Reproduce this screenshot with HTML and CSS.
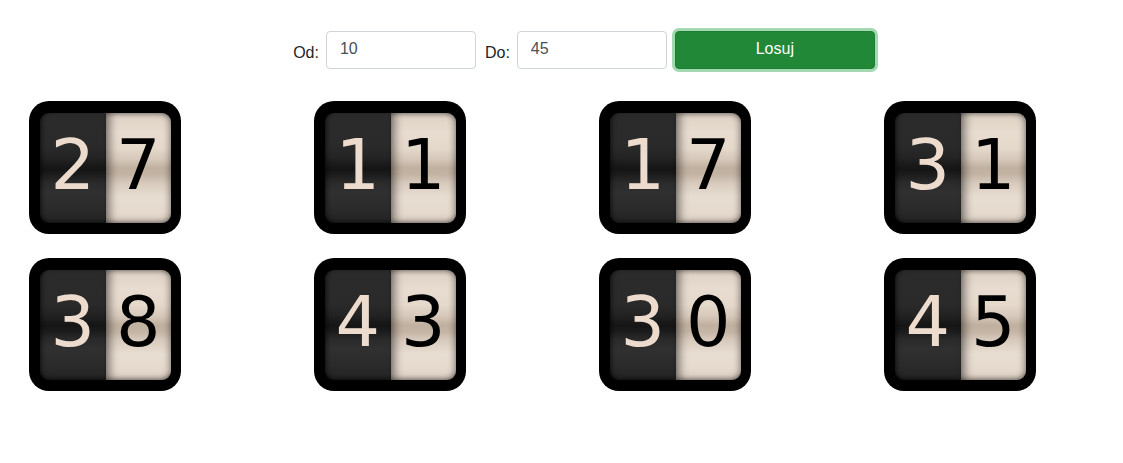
FILE: index.html
```html
<!DOCTYPE html>
<html lang="pl">
<head>
<meta charset="utf-8">
<title>Losowanie</title>
<link rel="stylesheet" href="styles.css">
</head>
<body>
<form class="controls">
  <label class="lbl" for="od">Od:</label>
  <input class="field" id="od" type="text" value="10">
  <label class="lbl" for="do">Do:</label>
  <input class="field" id="do" type="text" value="45">
  <button class="btn" type="button">Losuj</button>
</form>
<div class="board">
  <div class="card"><span class="half dark">2</span><span class="half light">7</span></div>
  <div class="card"><span class="half dark">1</span><span class="half light">1</span></div>
  <div class="card"><span class="half dark">1</span><span class="half light">7</span></div>
  <div class="card"><span class="half dark">3</span><span class="half light">1</span></div>
  <div class="card"><span class="half dark">3</span><span class="half light">8</span></div>
  <div class="card"><span class="half dark">4</span><span class="half light">3</span></div>
  <div class="card"><span class="half dark">3</span><span class="half light">0</span></div>
  <div class="card"><span class="half dark">4</span><span class="half light">5</span></div>
</div>
</body>
</html>
```
FILE: styles.css
```css
html, body {
  margin: 0;
  padding: 0;
  background: #fff;
}
body {
  font-family: "Liberation Sans", Arial, sans-serif;
  color: #212529;
}
.controls {
  display: flex;
  align-items: center;
  justify-content: center;
  padding: 31px 0 0 45px;
  margin: 0;
  height: 38px;
}
.lbl {
  font-size: 16px;
  margin-right: 7px;
  padding-top: 6px;
}
.field {
  box-sizing: border-box;
  width: 150px;
  height: 38px;
  border: 1px solid #ced4da;
  border-radius: 4px;
  padding: 0 12px 2px 13px;
  font-family: "Liberation Sans", Arial, sans-serif;
  font-size: 16px;
  color: #495057;
  margin-right: 9px;
  background: #fff;
}
#do { margin-right: 8px; }
.btn {
  box-sizing: border-box;
  width: 200px;
  height: 38px;
  border: 1px solid #1e7e34;
  border-radius: 4px;
  background: #218838;
  color: #fff;
  font-family: "Liberation Sans", Arial, sans-serif;
  font-size: 16px;
  padding: 0 0 2px;
  box-shadow: 0 0 0 3px rgba(72, 180, 97, 0.5);
}
.board {
  display: grid;
  grid-template-columns: repeat(4, 152px);
  column-gap: 133px;
  row-gap: 24px;
  padding: 32px 0 0 29px;
}
.card {
  box-sizing: border-box;
  width: 152px;
  height: 133px;
  background: #000;
  border-radius: 20px;
  padding: 12px 10px 11px 11px;
  display: flex;
}
.half {
  flex: 1;
  height: 110px;
  line-height: 104px;
  text-align: center;
  font-family: "DejaVu Sans", sans-serif;
  font-size: 70px;
}
.dark {
  color: #eddccd;
  border-radius: 9px 0 0 9px;
  background: linear-gradient(to bottom,
    #2b2b2b 0%, #2a2a2a 30%, #242424 40%, #1a1a1a 47%, #151515 51%, #1c1c1c 56%,
    #2a2a2a 63%, #303030 72%, #2b2b2b 86%, #232323 100%);
  box-shadow: inset 3px 0 5px -2px rgba(0,0,0,0.6), inset 0 -3px 5px -2px rgba(0,0,0,0.5);
}
.light {
  color: #000;
  border-radius: 0 9px 9px 0;
  background: linear-gradient(to bottom,
    #ddd0c3 0%, #e8dcd0 18%, #e5d9cc 32%, #d6c8ba 42%, #c0b09f 50%,
    #c4b4a4 56%, #d8cbbe 64%, #e8ddd1 76%, #e6dace 90%, #d6c9bc 100%);
  box-shadow: inset 8px 0 8px -4px rgba(0,0,0,0.45), inset -4px 0 6px -2px rgba(0,0,0,0.35),
    inset 0 4px 5px -3px rgba(0,0,0,0.3), inset 0 -4px 5px -3px rgba(0,0,0,0.35);
}
```
